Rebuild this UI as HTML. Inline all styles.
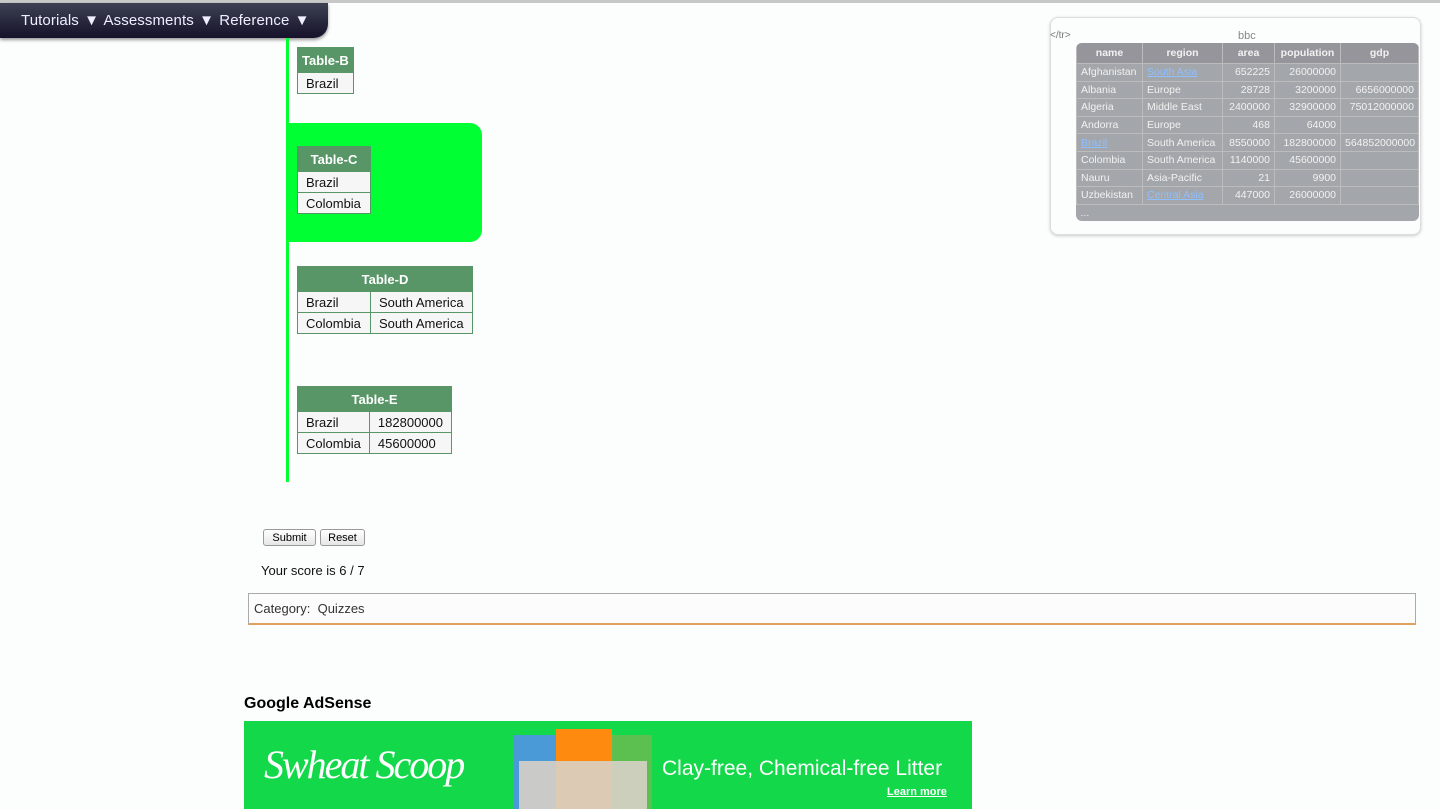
<!DOCTYPE html>
<html><head><meta charset="utf-8"><style>
body{margin:0;width:1440px;height:809px;overflow:hidden;background:#fcfdfd;font-family:"Liberation Sans",Arial,sans-serif;position:relative}
.abs{position:absolute}
#topline{left:0;top:0;width:1440px;height:3px;background:#c8c8c8}
#nav{left:0;top:3px;width:328px;height:35px;background:linear-gradient(#3d4152,#15122a);border-bottom-right-radius:14px;box-shadow:0 2px 3px rgba(0,0,0,.4);color:#eef;font-size:15px;line-height:36px;padding-left:21px;box-sizing:border-box;white-space:nowrap;letter-spacing:0.1px;word-spacing:1px}
#vline{left:286px;top:38px;width:3px;height:444px;background:#00ff33}
table.q{position:absolute;border-collapse:collapse;font-size:13px;color:#111;white-space:nowrap}
table.q th{background:#589667;color:#fff;font-weight:bold;height:24px;padding:0 4px;border:1px solid #589667}
table.q td{background:#f6f6f6;border:1px solid #589667;height:20px;padding:0 8px}
#cbox{left:287px;top:123px;width:195px;height:119px;background:#00ff33;border-radius:0 12px 12px 0}
#panel{left:1050px;top:17px;width:369px;height:216px;border:1px solid #ddd;border-radius:8px;box-shadow:0 1px 3px rgba(0,0,0,.2);background:#fcfdfd}
table.b{position:absolute;left:1076px;top:43px;width:343px;border-collapse:collapse;font-size:10.5px;color:#f2f2f2;background:#a3a6aa;border-radius:6px;overflow:hidden;table-layout:fixed}
table.b th{background:#96959c;height:18px;border:1px solid #bbb;border-top:0;font-weight:bold}
table.b td{height:16.6px;border:1px solid #bcbcbc;padding:0 4px;white-space:nowrap;overflow:hidden}
table.b td.r{text-align:right}
table.b a{color:#8fc0ff;text-decoration:underline}
.btn{position:absolute;top:529px;height:17px;border:1px solid #999;border-radius:3px;background:linear-gradient(#fff,#e6e6e6);font-size:11px;line-height:16px;text-align:center;box-sizing:border-box}
</style></head><body>
<div class="abs" id="topline"></div>
<div class="abs" id="nav">Tutorials ▼ Assessments ▼ Reference ▼</div>
<div class="abs" id="vline"></div>
<div class="abs" id="cbox"></div>
<table class="q" style="left:297px;top:47px;width:56px"><tr><th>Table-B</th></tr><tr><td>Brazil</td></tr></table>
<table class="q" style="left:297px;top:146px;width:74px"><tr><th>Table-C</th></tr><tr><td>Brazil</td></tr><tr><td>Colombia</td></tr></table>
<table class="q" style="left:297px;top:266px;width:176px"><tr><th colspan="2">Table-D</th></tr><tr><td style="width:56px">Brazil</td><td>South America</td></tr><tr><td>Colombia</td><td>South America</td></tr></table>
<table class="q" style="left:297px;top:386px;width:155px"><tr><th colspan="2">Table-E</th></tr><tr><td style="width:56px">Brazil</td><td>182800000</td></tr><tr><td>Colombia</td><td>45600000</td></tr></table>
<div class="abs" id="panel"></div>
<div class="abs" style="left:1050px;top:30px;font-size:10px;color:#777">&lt;/tr&gt;</div>
<div class="abs" style="left:1238px;top:30px;font-size:11px;color:#888">bbc</div>
<table class="b">
<colgroup><col style="width:66px"><col style="width:80px"><col style="width:52px"><col style="width:66px"><col></colgroup>
<tr><th>name</th><th>region</th><th>area</th><th>population</th><th>gdp</th></tr>
<tr><td>Afghanistan</td><td><a>South Asia</a></td><td class="r">652225</td><td class="r">26000000</td><td></td></tr>
<tr><td>Albania</td><td>Europe</td><td class="r">28728</td><td class="r">3200000</td><td class="r">6656000000</td></tr>
<tr><td>Algeria</td><td>Middle East</td><td class="r">2400000</td><td class="r">32900000</td><td class="r">75012000000</td></tr>
<tr><td>Andorra</td><td>Europe</td><td class="r">468</td><td class="r">64000</td><td></td></tr>
<tr><td><a>Brazil</a></td><td>South America</td><td class="r">8550000</td><td class="r">182800000</td><td class="r">564852000000</td></tr>
<tr><td>Colombia</td><td>South America</td><td class="r">1140000</td><td class="r">45600000</td><td></td></tr>
<tr><td>Nauru</td><td>Asia-Pacific</td><td class="r">21</td><td class="r">9900</td><td></td></tr>
<tr><td>Uzbekistan</td><td><a>Central Asia</a></td><td class="r">447000</td><td class="r">26000000</td><td></td></tr>
<tr><td colspan="5" style="border:0">...</td></tr>
</table>
<div class="btn" style="left:263px;width:53px">Submit</div>
<div class="btn" style="left:320px;width:45px">Reset</div>
<div class="abs" style="left:261px;top:563px;font-size:13px;color:#111">Your score is 6 / 7</div>
<div class="abs" style="left:248px;top:593px;width:1168px;height:32px;border:1px solid #aaa;border-bottom:2px solid #e0a060;background:#fcfcfc;font-size:13px;color:#333;line-height:30px;padding-left:5px;box-sizing:border-box">Category:&nbsp; Quizzes</div>
<div class="abs" style="left:244px;top:695px;font-size:16px;font-weight:bold;color:#000">Google AdSense</div>
<div class="abs" style="left:244px;top:721px;width:728px;height:88px;background:#12d84a;overflow:hidden">
 <div class="abs" style="left:20px;top:20px;font-family:'Liberation Serif',serif;font-style:italic;font-size:40px;color:#fff;letter-spacing:-2px">Swheat Scoop</div>
 <div class="abs" style="left:270px;top:14px;width:48px;height:74px;background:#4a9ad8"></div>
 <div class="abs" style="left:368px;top:14px;width:40px;height:74px;background:#5cc050"></div>
 <div class="abs" style="left:312px;top:8px;width:56px;height:80px;background:#ff8a10"></div>
 <div class="abs" style="left:275px;top:40px;width:128px;height:48px;background:#d8d0c8;opacity:.9"></div>
 <div class="abs" style="left:418px;top:36px;font-size:21px;color:#fff">Clay-free, Chemical-free Litter</div>
 <div class="abs" style="left:643px;top:65px;font-size:11px;font-weight:bold;color:#fff;text-decoration:underline">Learn more</div>
</div>
</body></html>
